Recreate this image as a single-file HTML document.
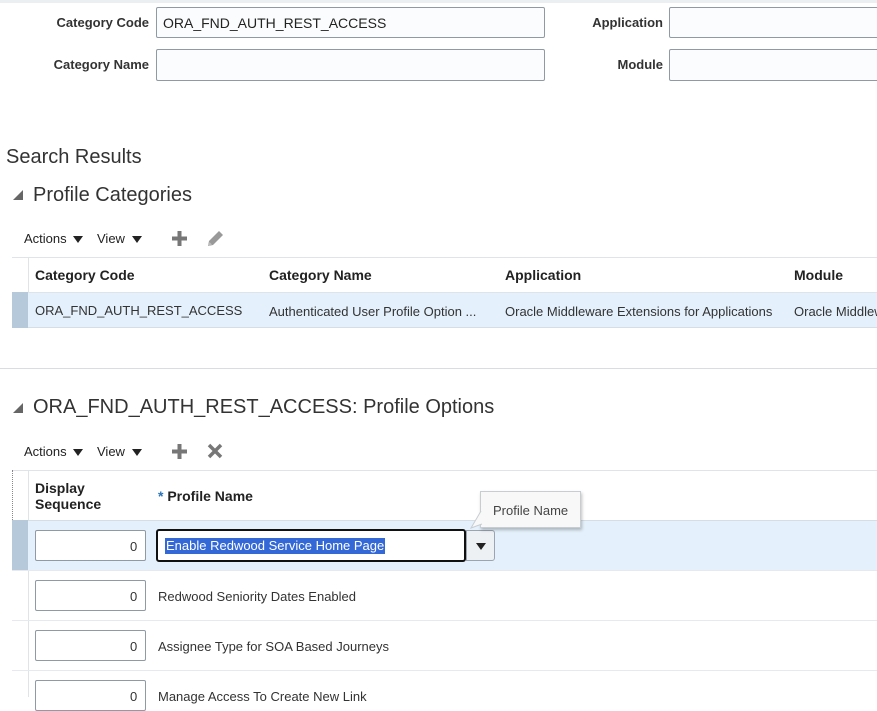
<!DOCTYPE html>
<html><head><style>
*{margin:0;padding:0;box-sizing:border-box}
body{width:877px;height:697px;overflow:hidden;background:#fff;font-family:"Liberation Sans",Arial,sans-serif;color:#333;position:relative}
.a{position:absolute;white-space:nowrap}
.lbl{font-size:13px;font-weight:bold;color:#333;text-align:right}
.inp{position:absolute;border:1px solid #8f9aa5;border-radius:2px;background:#fbfcfd}
.h{font-size:20px;color:#333}
.tb{font-size:13px;color:#222}
.th{font-size:14px;font-weight:bold;color:#222}
.td{font-size:13px;color:#333}
.tri{position:absolute;width:0;height:0;border-left:5px solid transparent;border-right:5px solid transparent;border-top:7px solid #222}
.hl{position:absolute;left:0;width:877px;height:1px;background:#dfe4e8}
</style></head><body>
<div class="hl" style="top:0;height:3px;background:#eceff1"></div>
<div class="a lbl" style="left:40px;top:15px;width:109px">Category Code</div>
<div class="inp" style="left:156px;top:7px;width:389px;height:31px"></div>
<div class="a td" style="left:163px;top:15px;font-size:14px;color:#222">ORA_FND_AUTH_REST_ACCESS</div>
<div class="a lbl" style="left:40px;top:57px;width:109px">Category Name</div>
<div class="inp" style="left:156px;top:49px;width:389px;height:32px"></div>
<div class="a lbl" style="left:560px;top:15px;width:103px">Application</div>
<div class="inp" style="left:669px;top:7px;width:220px;height:31px"></div>
<div class="a lbl" style="left:560px;top:57px;width:103px">Module</div>
<div class="inp" style="left:669px;top:49px;width:220px;height:32px"></div>

<div class="a h" style="left:6px;top:146px">Search Results</div>
<svg class="a" style="left:12px;top:189px" width="12" height="12"><path d="M11 1 L11 11 L1 11 Z" fill="#666"/></svg>
<div class="a h" style="left:33px;top:184px">Profile Categories</div>

<div class="a tb" style="left:24px;top:231px">Actions</div><div class="tri" style="left:73px;top:236px"></div>
<div class="a tb" style="left:97px;top:231px">View</div><div class="tri" style="left:132px;top:236px"></div>
<svg class="a" style="left:171px;top:230px" width="17" height="17"><path d="M8.5 1v15M1 8.5h15" stroke="#777" stroke-width="4"/></svg>
<svg class="a" style="left:205px;top:229px" width="20" height="20"><path d="M3 17l1-5L14 2l4 4L8 16z" fill="#999"/><path d="M3 17l1.5-4 2.5 2.5z" fill="#bbb"/></svg>

<div class="hl" style="top:257px;left:12px;width:865px"></div>
<div class="a" style="left:28px;top:257px;width:1px;height:71px;background:#dfe4e8"></div>
<div class="a th" style="left:35px;top:267px">Category Code</div>
<div class="a th" style="left:269px;top:267px">Category Name</div>
<div class="a th" style="left:505px;top:267px">Application</div>
<div class="a th" style="left:794px;top:267px">Module</div>
<div class="a" style="left:12px;top:292px;width:865px;height:36px;background:#e4f0fb;border-top:1px solid #dfe4e8;border-bottom:1px solid #d5dde5"></div>
<div class="a" style="left:12px;top:292px;width:16px;height:36px;background:#b5c9da"></div>
<div class="a td" style="left:35px;top:303px">ORA_FND_AUTH_REST_ACCESS</div>
<div class="a td" style="left:269px;top:304px">Authenticated User Profile Option ...</div>
<div class="a td" style="left:505px;top:304px">Oracle Middleware Extensions for Applications</div>
<div class="a td" style="left:794px;top:304px">Oracle Middleware</div>

<div class="hl" style="top:368px;background:#d8dde2"></div>
<svg class="a" style="left:12px;top:402px" width="12" height="12"><path d="M11 1 L11 11 L1 11 Z" fill="#666"/></svg>
<div class="a h" style="left:33px;top:396px">ORA_FND_AUTH_REST_ACCESS: Profile Options</div>

<div class="a tb" style="left:24px;top:444px">Actions</div><div class="tri" style="left:73px;top:449px"></div>
<div class="a tb" style="left:97px;top:444px">View</div><div class="tri" style="left:132px;top:449px"></div>
<svg class="a" style="left:171px;top:443px" width="17" height="17"><path d="M8.5 1v15M1 8.5h15" stroke="#777" stroke-width="4"/></svg>
<svg class="a" style="left:207px;top:443px" width="16" height="16"><path d="M2 2l12 12M14 2L2 14" stroke="#777" stroke-width="3.5"/></svg>

<div class="hl" style="top:470px;left:12px;width:865px"></div>
<div class="a" style="left:12px;top:470px;width:1px;height:50px;border-left:1px dotted #888"></div>
<div class="a" style="left:28px;top:470px;width:1px;height:227px;background:#dfe4e8"></div>
<div class="a th" style="left:35px;top:480px;line-height:16px">Display<br>Sequence</div>
<div class="a th" style="left:158px;top:488px"><span style="color:#2a73b8">*</span> Profile Name</div>

<div class="a" style="left:12px;top:520px;width:865px;height:50px;background:#e4f0fb;border-top:1px solid #d5dde5"></div>
<div class="a" style="left:12px;top:520px;width:16px;height:50px;background:#b5c9da"></div>
<div class="inp" style="left:35px;top:530px;width:111px;height:31px;background:#fff"></div>
<div class="a td" style="left:130px;top:539px">0</div>
<div class="a" style="left:156px;top:529px;width:310px;height:33px;border:2px solid #111;border-radius:3px;background:#fff"></div>
<div class="a" style="left:165px;top:538px;background:#3368d6;color:#fff;font-size:13px;padding:0 1px;line-height:16px">Enable Redwood Service Home Page</div>
<div class="a" style="left:466px;top:530px;width:29px;height:31px;border:1px solid #9aa5b0;border-radius:0 3px 3px 0;background:#eef1f4"></div>
<div class="tri" style="left:476px;top:543px"></div>

<div class="a" style="left:480px;top:491px;width:101px;height:37px;background:#f8f8f8;border:1px solid #c8cdd2;box-shadow:1px 2px 3px rgba(0,0,0,.25)"></div>
<svg class="a" style="left:468px;top:510px" width="16" height="20"><path d="M13 1 L3 18 L14 14" fill="#f8f8f8" stroke="#c8cdd2"/></svg>
<div class="a td" style="left:493px;top:503px;color:#444">Profile Name</div>

<div class="hl" style="top:570px;left:12px;width:865px;background:#e6eaee"></div>
<div class="inp" style="left:35px;top:580px;width:111px;height:31px;background:#fff"></div>
<div class="a td" style="left:130px;top:589px">0</div>
<div class="a td" style="left:158px;top:589px">Redwood Seniority Dates Enabled</div>
<div class="hl" style="top:620px;left:12px;width:865px;background:#e6eaee"></div>
<div class="inp" style="left:35px;top:630px;width:111px;height:31px;background:#fff"></div>
<div class="a td" style="left:130px;top:639px">0</div>
<div class="a td" style="left:158px;top:639px">Assignee Type for SOA Based Journeys</div>
<div class="hl" style="top:670px;left:12px;width:865px;background:#e6eaee"></div>
<div class="inp" style="left:35px;top:680px;width:111px;height:31px;background:#fff"></div>
<div class="a td" style="left:130px;top:689px">0</div>
<div class="a td" style="left:158px;top:689px">Manage Access To Create New Link</div>
</body></html>
